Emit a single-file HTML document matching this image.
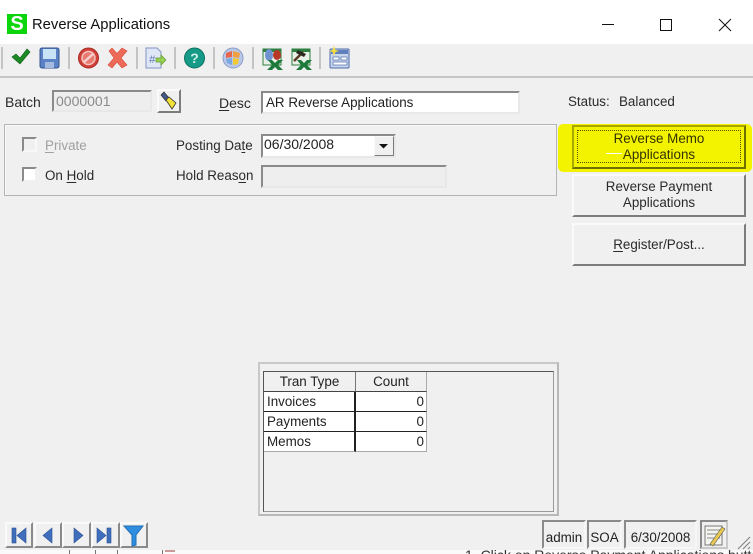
<!DOCTYPE html>
<html><head><meta charset="utf-8">
<style>
html,body{margin:0;padding:0;width:753px;height:554px;overflow:hidden;background:#f0f0f0}
body{position:relative;font-family:"Liberation Sans",sans-serif;font-size:13.4px;color:#222;filter:blur(.3px)}
.a{position:absolute;white-space:nowrap}
.t{position:absolute;white-space:nowrap;line-height:16px;color:#2a2a2a}
.sep{position:absolute;top:47px;width:2px;height:22px;background:#c4c4c4}
.sunk{position:absolute;box-sizing:border-box;border:2px solid;border-color:#8a8a8a #e8e8e8 #e8e8e8 #8a8a8a}
.btn{position:absolute;box-sizing:border-box;background:#f0f0f0;border:2px solid;border-color:#fafafa #7c7c7c #7c7c7c #fafafa;text-align:center;line-height:16px;color:#2a2a2a}
.nav{position:absolute;top:522px;height:26px;box-sizing:border-box;background:#f0f0f0;border:2px solid;border-color:#fafafa #8a8a8a #8a8a8a #fafafa}
.stat{position:absolute;top:520px;height:29px;box-sizing:border-box;border:2px solid;border-color:#8a8a8a #f6f6f6 #f6f6f6 #8a8a8a;line-height:32px;text-align:center;color:#222}
u{text-underline-offset:2px}
svg{position:absolute;overflow:visible}
.cell{position:absolute;box-sizing:border-box;line-height:19px;color:#222}
</style></head><body>
<div class="a" style="left:0;top:0;width:753px;height:44px;background:#fff"></div>
<div class="a" style="left:7px;top:14px;width:20px;height:20px;background:#0bd60b;color:#fff;font-weight:bold;font-size:20px;line-height:20px;text-align:center">S</div>
<div class="a" style="left:32px;top:16px;font-size:14.8px;line-height:18px;color:#111">Reverse Applications</div>
<svg style="left:0;top:0" width="753" height="44"><g stroke="#111" stroke-width="1" fill="none"><path d="M602 24.5H614"/><rect x="660.5" y="19.5" width="11" height="11"/><path d="M719 19L731 31M731 19L719 31"/></g></svg>

<div class="a" style="left:0;top:76px;width:753px;height:2px;background:#c6c6c6"></div>
<div class="sep" style="left:1px"></div><div class="sep" style="left:68px"></div><div class="sep" style="left:136px"></div><div class="sep" style="left:174px"></div><div class="sep" style="left:213px"></div><div class="sep" style="left:252px"></div><div class="sep" style="left:319px"></div>

<svg style="left:0;top:40px" width="360" height="40">
<path d="M12 17L16 14L20 18L27 9L30 12L20 24Z" fill="#1c8a24" stroke="#0c5c14" stroke-width=".6"/>
<rect x="40" y="8" width="19" height="20" rx="2" fill="#5a82c4" stroke="#33528f"/><rect x="43" y="9" width="13" height="10" fill="#c8e2f6"/><rect x="45" y="22" width="9" height="6" fill="#a4bbdf"/>
<circle cx="88.500" cy="18" r="10" fill="#d04038" stroke="#a82a24" stroke-width="1"/><circle cx="88.500" cy="18" r="6.500" fill="#e87a70" stroke="#f5c4c0" stroke-width="1.500"/><path d="M84 22L93 14" stroke="#f5d0cc" stroke-width="2.500"/>
<path d="M109 11L112 8L117 13.500L122 8L127 11L121 18L127 25L122 28L117 22L112 28L108 25L114 18Z" fill="#ee6a58" stroke="#d84c3c" stroke-width=".6"/>
<path d="M146 8H157L161 12V28H146Z" fill="#dfe6f5" stroke="#8294c4"/><text x="149" y="23" font-size="11" font-style="italic" fill="#6075b5" font-family="Liberation Sans">#</text><path d="M156 18H161V15L166 20L161 25V22H156Z" fill="#98d050" stroke="#5c9a30" stroke-width=".7"/>
<circle cx="194.500" cy="18" r="10" fill="#159a88" stroke="#0f7060"/><text x="194.500" y="23" text-anchor="middle" font-size="14" font-weight="bold" fill="#cfeee8" font-family="Liberation Sans">?</text>
<circle cx="233" cy="18" r="10" fill="#b9c8e8" stroke="#8a9cc6"/><path d="M226 13L232 11L232 17L226 18Z" fill="#e8674a"/><path d="M233 11L240 13L239 18L233 17Z" fill="#f0a040"/><path d="M226 19L232 18L232 25L227 23Z" fill="#7aa8e0"/><path d="M233 18L239 19L238 24L233 25Z" fill="#f3c830"/>
<rect x="263" y="9" width="18" height="16" fill="#e8f0e8" stroke="#2d8040"/><rect x="263" y="9" width="18" height="3" fill="#2d8040"/><ellipse cx="269" cy="15" rx="4" ry="6" fill="#6f92d0"/><ellipse cx="277" cy="15" rx="4" ry="5" fill="#b83828"/><path d="M268 20L272 20L275 23L278 20L283 20L278 25L283 30L278 30L275 27L272 30L267 30L272 25Z" fill="#1d7a3a"/>
<rect x="292" y="9" width="18" height="16" fill="#e8f0e8" stroke="#2d8040"/><rect x="292" y="9" width="18" height="3" fill="#2d8040"/><path d="M294 21L303 12" stroke="#5a3a20" stroke-width="2.500"/><path d="M298 10L306 14L304 17L296 13Z" fill="#2a2a20"/><path d="M297 20L301 20L304 23L307 20L312 20L307 25L312 30L307 30L304 27L301 30L296 30L301 25Z" fill="#1d7a3a"/>
<rect x="330" y="9" width="19" height="19" rx="1" fill="#c8d6ee" stroke="#4c6aa8"/><rect x="331" y="10" width="17" height="4" fill="#5f80bc"/><rect x="333" y="17" width="6" height="3" fill="#fff" stroke="#4c6aa8" stroke-width=".7"/><rect x="341" y="17" width="6" height="3" fill="#fff" stroke="#4c6aa8" stroke-width=".7"/><rect x="333" y="22" width="14" height="3" fill="#fff" stroke="#4c6aa8" stroke-width=".7"/><path d="M334 6L335.500 10L339 11L335.500 12L334 16L332.500 12L329 11L332.500 10Z" fill="#f2dc40"/>
</svg>

<div class="t" style="left:5px;top:94px;font-size:14px">Batch</div>
<div class="sunk" style="left:52px;top:90px;width:100px;height:22px;color:#8a8a8a;padding-left:2px;line-height:18px;background:#eee;font-size:14px">0000001</div>
<div class="btn" style="left:157px;top:89px;width:24px;height:24px"></div>
<svg style="left:157px;top:89px" width="24" height="24"><path d="M4 6L7 3L12 9L9 12Z" fill="#46598a" stroke="#222" stroke-width=".6"/><path d="M9 11L12 8L19 14L15 20Z" fill="#f3e23a" stroke="#333" stroke-width=".8"/></svg>
<div class="t" style="left:219px;top:95px;font-size:14px"><u>D</u>esc</div>
<div class="sunk" style="left:261px;top:91px;width:259px;height:23px;background:#fff;color:#222;padding-left:3px;line-height:19px">AR Reverse Applications</div>
<div class="t" style="left:568px;top:94px">Status:</div>
<div class="t" style="left:619px;top:94px">Balanced</div>

<div class="a" style="left:4px;top:124px;width:553px;height:72px;box-sizing:border-box;border:1px solid #b4b4b4;box-shadow:inset 1px 1px 0 #fafafa"></div>
<div class="a" style="left:22px;top:137px;width:15px;height:15px;box-sizing:border-box;border:2px solid;border-color:#8a8a8a #f8f8f8 #f8f8f8 #8a8a8a;background:#f0f0f0"></div>
<div class="t" style="left:45px;top:138px;color:#a0a0a0"><u>P</u>rivate</div>
<div class="a" style="left:22px;top:167px;width:15px;height:15px;box-sizing:border-box;border:2px solid;border-color:#8a8a8a #f0f0f0 #f0f0f0 #8a8a8a;background:#fff"></div>
<div class="t" style="left:45px;top:168px">On <u>H</u>old</div>
<div class="t" style="left:176px;top:138px">Posting Da<u>t</u>e</div>
<div class="t" style="left:176px;top:168px">Hold Reas<u>o</u>n</div>
<div class="sunk" style="left:261px;top:134px;width:135px;height:24px;background:#fff;line-height:17px;padding-left:1px;color:#222;font-size:14px">06/30/2008</div>
<div class="btn" style="left:374px;top:136px;width:20px;height:20px;border-width:1px"></div>
<svg style="left:374px;top:136px" width="20" height="20"><path d="M5 8H14L9.500 12.500Z" fill="#111"/></svg>
<div class="sunk" style="left:261px;top:165px;width:186px;height:23px;background:#eee"></div>

<div class="a" style="left:558px;top:124px;width:194px;height:48px;background:#f3f300;border-radius:5px"></div>
<div class="btn" style="left:572px;top:125px;width:174px;height:44px;background:#f3f300;border-color:#a8a800 #707000 #707000 #a8a800;color:#333300;padding-top:4px">Reverse Memo<br>Applications</div>
<div class="a" style="left:577px;top:130px;width:164px;height:33px;box-sizing:border-box;border:1px dotted #555500"></div>
<div class="a" style="left:606px;top:153px;width:16px;height:1px;background:#fff"></div>
<div class="btn" style="left:572px;top:174px;width:174px;height:43px;padding-top:3px">Reverse Payment<br>Applications</div>
<div class="btn" style="left:572px;top:223px;width:174px;height:43px;line-height:39px"><u>R</u>egister/Post...</div>

<div class="a" style="left:258px;top:362px;width:301px;height:154px;box-sizing:border-box;border:2px solid;border-color:#c8c8c8 #b8b8b8 #b8b8b8 #c8c8c8;background:#f0f0f0"></div>
<div class="a" style="left:263px;top:371px;width:291px;height:141px;box-sizing:border-box;border:1px solid;border-color:#555 #999 #999 #555;background:#f0f0f0"></div>
<div class="cell" style="left:264px;top:372px;width:92px;height:20px;border-right:1px solid #777;border-bottom:1px solid #444;text-align:center">Tran Type</div>
<div class="cell" style="left:356px;top:372px;width:71px;height:20px;border-right:1px solid #aaa;border-bottom:1px solid #444;text-align:center">Count</div>
<div class="cell" style="left:264px;top:392px;width:92px;height:20px;background:#fff;border-right:2px solid #222;border-bottom:1px solid #222;padding-left:3px">Invoices</div>
<div class="cell" style="left:356px;top:392px;width:71px;height:20px;background:#fff;border-right:1px solid #aaa;border-bottom:1px solid #222;text-align:right;padding-right:2px">0</div>
<div class="cell" style="left:264px;top:412px;width:92px;height:20px;background:#fff;border-right:2px solid #222;border-bottom:1px solid #222;padding-left:3px">Payments</div>
<div class="cell" style="left:356px;top:412px;width:71px;height:20px;background:#fff;border-right:1px solid #aaa;border-bottom:1px solid #222;text-align:right;padding-right:2px">0</div>
<div class="cell" style="left:264px;top:432px;width:92px;height:20px;background:#fff;border-right:2px solid #222;border-bottom:1px solid #aaa;padding-left:3px">Memos</div>
<div class="cell" style="left:356px;top:432px;width:71px;height:20px;background:#fff;border-right:1px solid #aaa;border-bottom:1px solid #aaa;text-align:right;padding-right:2px">0</div>

<div class="nav" style="left:5px;width:28px"></div><div class="nav" style="left:34px;width:28px"></div><div class="nav" style="left:62px;width:29px"></div><div class="nav" style="left:91px;width:29px"></div><div class="nav" style="left:120px;width:28px"></div>
<svg style="left:0;top:505px" width="160" height="49">
<g fill="#3f6ebd" stroke="#2b4f92" stroke-width=".6"><rect x="12" y="23" width="4" height="15"/><path d="M26 23V38L17 30.500Z"/><path d="M52 23V38L43 30.500Z"/><path d="M74 23V38L83 30.500Z"/><path d="M97 23V38L106 30.500Z"/><rect x="107" y="23" width="4" height="15"/></g>
<path d="M124 21H143L136 30V40L132 41V30Z" fill="#2f8ee0" stroke="#1f6cb4"/>
</svg>

<div class="stat" style="left:542px;width:44px">admin</div>
<div class="stat" style="left:587px;width:35px">SOA</div>
<div class="stat" style="left:624px;width:73px">6/30/2008</div>
<div class="stat" style="left:700px;width:28px;border-color:#8a8a8a #c8c8c8 #c8c8c8 #8a8a8a"></div>
<svg style="left:700px;top:520px" width="53" height="34">
<rect x="5" y="6" width="17" height="19" fill="#f4f4f0" stroke="#777"/><path d="M7 10H20M7 14H20M7 18H20" stroke="#888"/><path d="M10 24L22 7L25 9L13 26Z" fill="#e8c850" stroke="#555" stroke-width=".6"/>
<path d="M38 29L50 17M43 29L50 22M48 29L50 27" stroke="#888" stroke-width="1.200"/>
</svg>

<div class="a" style="left:0;top:550px;width:753px;height:4px;background:#fafafa;overflow:hidden">
<div class="a" style="left:465px;top:-3px;font-size:14px;line-height:16px;color:#333">1. Click on Reverse Payment Applications button</div>
<div class="a" style="left:69px;top:0;width:1px;height:4px;background:#777"></div>
<div class="a" style="left:95px;top:0;width:1px;height:4px;background:#777"></div>
<div class="a" style="left:117px;top:0;width:1px;height:4px;background:#777"></div>
<div class="a" style="left:162px;top:0;width:1px;height:4px;background:#777"></div>
<div class="a" style="left:165px;top:0;width:10px;height:2px;background:#c99"></div>
</div>
</body></html>
